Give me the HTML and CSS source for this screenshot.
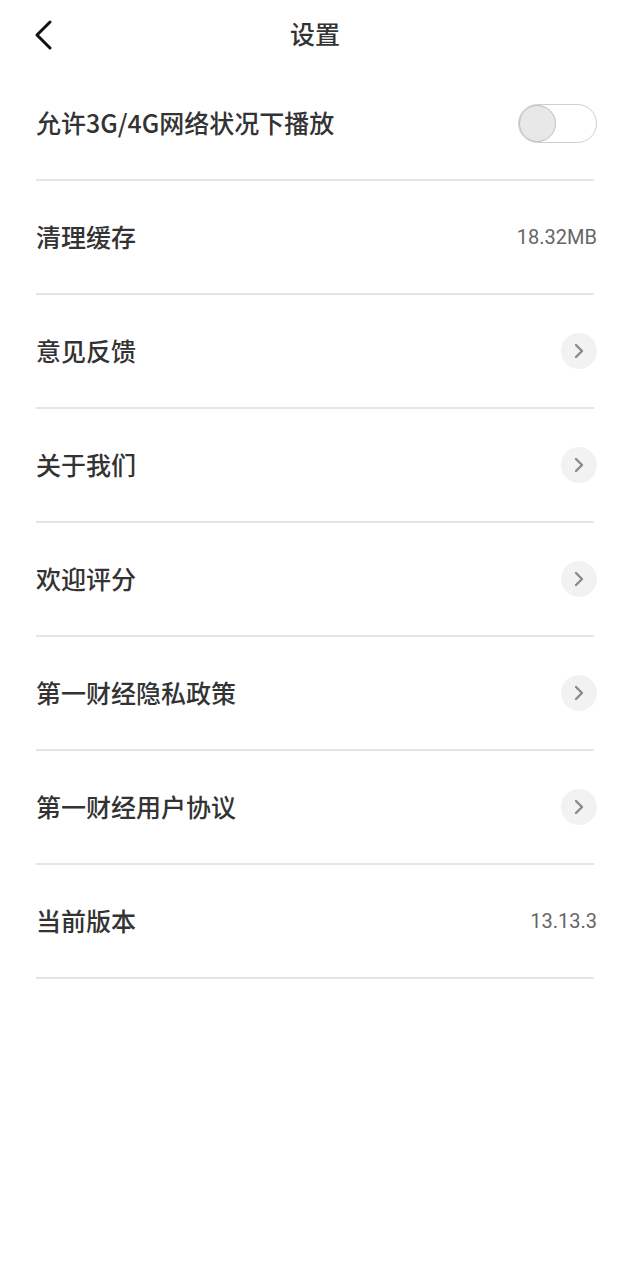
FILE: index.html
```
<html>
    <head>
        <title>设置</title>
        <link rel="stylesheet" href="styles.css">
    </head>
    <body>
        <div class="header">
            <svg class="back" width="20" height="30" viewBox="0 0 20 30">
                <path d="M16 2 L3 15 L16 28" fill="none" stroke="#111" stroke-width="3" stroke-linecap="round" stroke-linejoin="round"/>
            </svg>
            <div class="title">设置</div>
        </div>
        <div class="list">
            <div class="row">
                <span class="label">允许3G/4G网络状况下播放</span>
                <div class="toggle"><div class="knob"></div></div>
            </div>
            <div class="row">
                <span class="label">清理缓存</span>
                <span class="value">18.32MB</span>
            </div>
            <div class="row">
                <span class="label">意见反馈</span>
                <span class="arrow"><svg width="14" height="18" viewBox="0 0 14 18"><path d="M4 3 L10 9 L4 15" fill="none" stroke="#8a8a8a" stroke-width="2.4" stroke-linecap="round" stroke-linejoin="round"/></svg></span>
            </div>
            <div class="row">
                <span class="label">关于我们</span>
                <span class="arrow"><svg width="14" height="18" viewBox="0 0 14 18"><path d="M4 3 L10 9 L4 15" fill="none" stroke="#8a8a8a" stroke-width="2.4" stroke-linecap="round" stroke-linejoin="round"/></svg></span>
            </div>
            <div class="row">
                <span class="label">欢迎评分</span>
                <span class="arrow"><svg width="14" height="18" viewBox="0 0 14 18"><path d="M4 3 L10 9 L4 15" fill="none" stroke="#8a8a8a" stroke-width="2.4" stroke-linecap="round" stroke-linejoin="round"/></svg></span>
            </div>
            <div class="row">
                <span class="label">第一财经隐私政策</span>
                <span class="arrow"><svg width="14" height="18" viewBox="0 0 14 18"><path d="M4 3 L10 9 L4 15" fill="none" stroke="#8a8a8a" stroke-width="2.4" stroke-linecap="round" stroke-linejoin="round"/></svg></span>
            </div>
            <div class="row">
                <span class="label">第一财经用户协议</span>
                <span class="arrow"><svg width="14" height="18" viewBox="0 0 14 18"><path d="M4 3 L10 9 L4 15" fill="none" stroke="#8a8a8a" stroke-width="2.4" stroke-linecap="round" stroke-linejoin="round"/></svg></span>
            </div>
            <div class="row">
                <span class="label">当前版本</span>
                <span class="value">13.13.3</span>
            </div>
        </div>
    </body>
</html>
```
FILE: styles.css
```
body {
    margin: 0;
    background: #fff;
    font-family: "Noto Sans CJK SC", "Noto Sans", sans-serif;
    color: #333;
}
.header {
    height: 67px;
    display: flex;
    align-items: center;
    justify-content: center;
    position: relative;
}
.back {
    position: absolute;
    left: 34px;
    top: 20px;
}
.title {
    font-size: 25px;
    font-weight: 500;
    color: #333;
    margin-top: -2px;
}
.list {
    padding: 0 33px 0 36px;
}
.row {
    height: 112px;
    display: flex;
    align-items: center;
    justify-content: space-between;
    border-bottom: 2px solid #e5e5e5;
    margin-right: 3px;
}
.label {
    font-size: 25px;
    font-weight: 500;
    color: #333;
    margin-top: -3px;
}
.value {
    font-family: Roboto, "Noto Sans", sans-serif;
    font-size: 20px;
    color: #666;
    margin-right: -3px;
}
.toggle {
    width: 77px;
    height: 37px;
    border: 1px solid #cfcfcf;
    border-radius: 20px;
    margin-right: -3px;
    box-sizing: content-box;
    position: relative;
}
.knob {
    width: 37px;
    height: 37px;
    border-radius: 50%;
    background: #e8e8e8;
    border: 1px solid #bdbdbd;
    box-sizing: border-box;
}
.arrow {
    width: 36px;
    height: 36px;
    border-radius: 50%;
    background: #f2f2f2;
    display: flex;
    align-items: center;
    justify-content: center;
    margin-right: -3px;
}
```
